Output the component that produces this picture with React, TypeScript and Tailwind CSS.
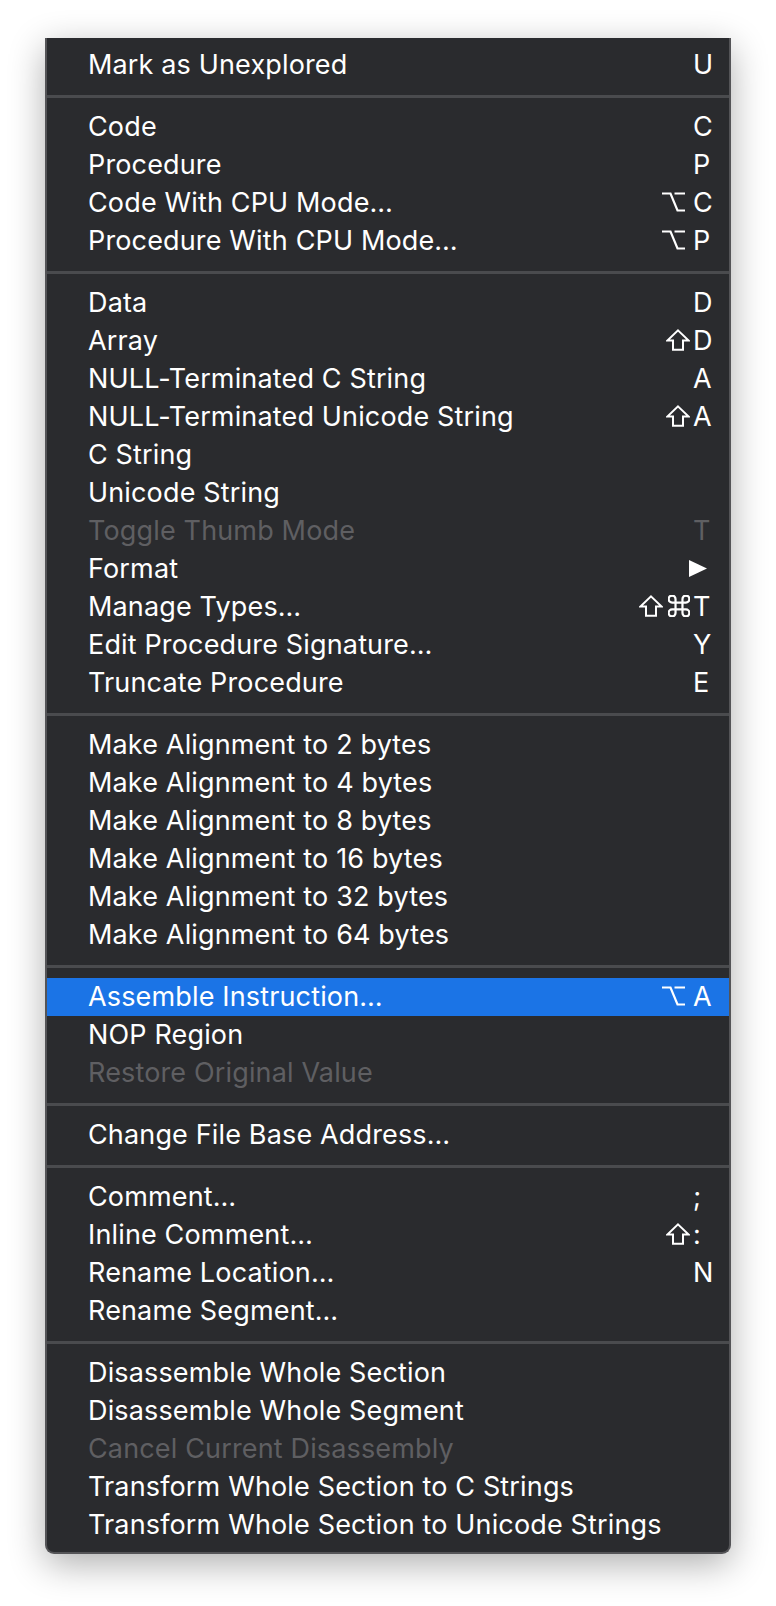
import React from 'react';

type Mod = 'shift' | 'option' | 'cmd';

interface MenuItem {
  label: string;
  mods?: Mod[];
  keyChar?: string;
  disabled?: boolean;
  selected?: boolean;
  submenu?: boolean;
}

const sections: MenuItem[][] = [
  [{ label: 'Mark as Unexplored', keyChar: 'U' }],
  [
    { label: 'Code', keyChar: 'C' },
    { label: 'Procedure', keyChar: 'P' },
    { label: 'Code With CPU Mode…', mods: ['option'], keyChar: 'C' },
    { label: 'Procedure With CPU Mode…', mods: ['option'], keyChar: 'P' },
  ],
  [
    { label: 'Data', keyChar: 'D' },
    { label: 'Array', mods: ['shift'], keyChar: 'D' },
    { label: 'NULL-Terminated C String', keyChar: 'A' },
    { label: 'NULL-Terminated Unicode String', mods: ['shift'], keyChar: 'A' },
    { label: 'C String' },
    { label: 'Unicode String' },
    { label: 'Toggle Thumb Mode', keyChar: 'T', disabled: true },
    { label: 'Format', submenu: true },
    { label: 'Manage Types…', mods: ['shift', 'cmd'], keyChar: 'T' },
    { label: 'Edit Procedure Signature…', keyChar: 'Y' },
    { label: 'Truncate Procedure', keyChar: 'E' },
  ],
  [
    { label: 'Make Alignment to 2 bytes' },
    { label: 'Make Alignment to 4 bytes' },
    { label: 'Make Alignment to 8 bytes' },
    { label: 'Make Alignment to 16 bytes' },
    { label: 'Make Alignment to 32 bytes' },
    { label: 'Make Alignment to 64 bytes' },
  ],
  [
    { label: 'Assemble Instruction…', mods: ['option'], keyChar: 'A', selected: true },
    { label: 'NOP Region' },
    { label: 'Restore Original Value', disabled: true },
  ],
  [{ label: 'Change File Base Address…' }],
  [
    { label: 'Comment…', keyChar: ';' },
    { label: 'Inline Comment…', mods: ['shift'], keyChar: ':' },
    { label: 'Rename Location…', keyChar: 'N' },
    { label: 'Rename Segment…' },
  ],
  [
    { label: 'Disassemble Whole Section' },
    { label: 'Disassemble Whole Segment' },
    { label: 'Cancel Current Disassembly', disabled: true },
    { label: 'Transform Whole Section to C Strings' },
    { label: 'Transform Whole Section to Unicode Strings' },
  ],
];

const ModGlyph: React.FC<{ mod: Mod }> = ({ mod }) => {
  if (mod === 'shift') {
    return (
      <svg width="24" height="22" viewBox="0 0 24 22" fill="none" stroke="currentColor" strokeWidth="2" strokeLinejoin="miter">
        <path d="M12 1.4 L22.6 11.6 H17 V20.8 H7 V11.6 H1.4 Z" />
      </svg>
    );
  }
  if (mod === 'option') {
    return (
      <svg width="30" height="20" viewBox="0 0 30 20" fill="none" stroke="currentColor" strokeWidth="2.2">
        <path d="M2 1.5 H10.5 L17.5 18.5 H25 M14.5 1.5 H25" />
      </svg>
    );
  }
  return (
    <svg width="22" height="22" viewBox="2.5 2.5 19 19" fill="none" stroke="currentColor" strokeWidth="1.9">
      <path d="M15 6v12a3 3 0 1 0 3-3H6a3 3 0 1 0 3 3V6a3 3 0 1 0-3 3h12a3 3 0 1 0-3-3" />
    </svg>
  );
};

const Row: React.FC<{ item: MenuItem }> = ({ item }) => {
  const tone = item.disabled ? 'text-[#5f5f62]' : 'text-white';
  return (
    <div
      className={`flex h-[38px] items-center pl-[41px] pr-[12px] ${tone} ${item.selected ? 'bg-[#1b74e6]' : ''}`}
    >
      <span className="flex-1 whitespace-nowrap leading-[38px]">{item.label}</span>
      {item.mods && (
        <span className="mr-[3px] flex items-center gap-[5px] pb-[2px]">
          {item.mods.map((m, i) => (
            <ModGlyph key={i} mod={m} />
          ))}
        </span>
      )}
      {item.submenu ? (
        <svg className="mr-[10px] mb-[2px]" width="18" height="17" viewBox="0 0 18 17" fill="currentColor">
          <path d="M0 0 L18 8.5 L0 17 Z" />
        </svg>
      ) : (
        <span className="w-[24px] text-left leading-[38px]">{item.keyChar ?? ''}</span>
      )}
    </div>
  );
};

export default function App() {
  return (
    <div className="min-h-[1606px] bg-white pl-[45px] pt-[38px]" style={{ fontFamily: 'Inter, "Noto Sans", sans-serif' }}>
      <div className="w-[686px] rounded-b-[9px] border-x-2 border-b-2 border-[#545457] bg-[#2a2b2e] pb-[8px] pt-[8px] text-[27px] tracking-[0.15px] shadow-[0_10px_36px_rgba(0,0,0,0.32)]">
        {sections.map((section, si) => (
          <div key={si}>
            {si > 0 && (
              <div className="pb-[10px] pt-[11px]">
                <div className="h-[3px] bg-[#4a4b4e]" />
              </div>
            )}
            {section.map((item) => (
              <Row key={item.label} item={item} />
            ))}
          </div>
        ))}
      </div>
    </div>
  );
}
